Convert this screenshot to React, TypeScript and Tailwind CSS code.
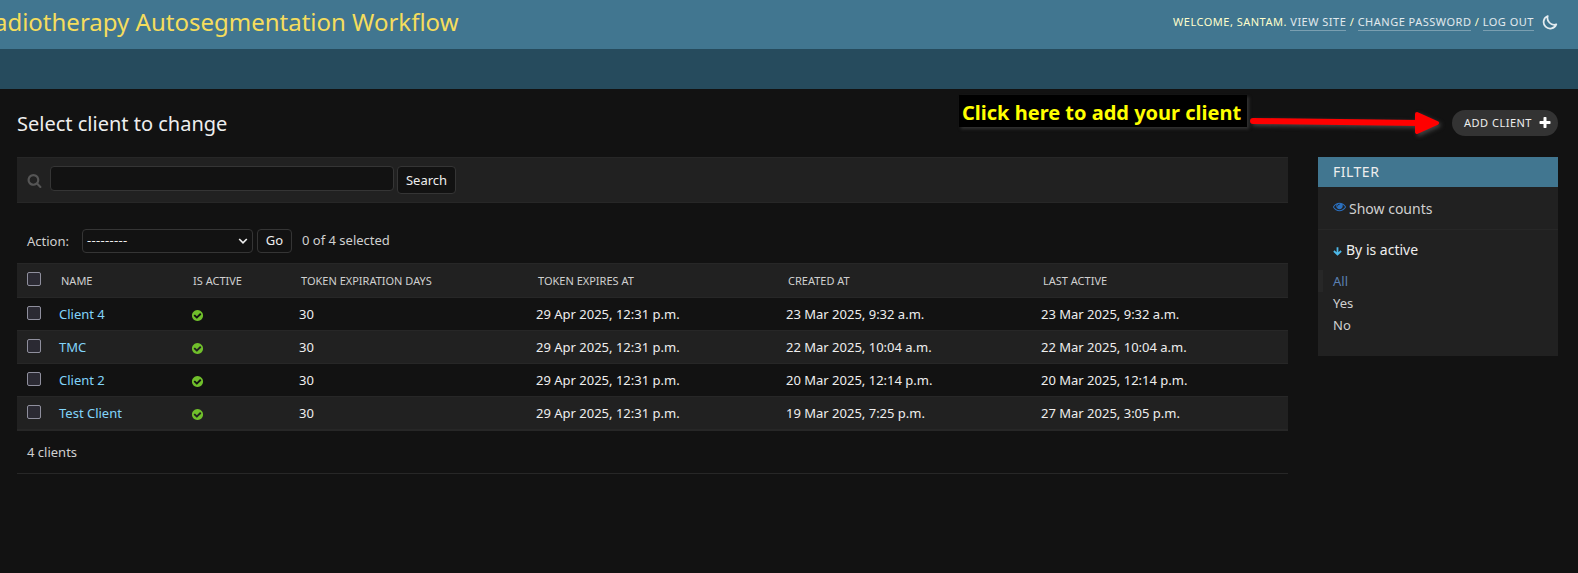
import React from "react";

const rows = [
  { name: "Client 4", created: "23 Mar 2025, 9:32 a.m.", last: "23 Mar 2025, 9:32 a.m." },
  { name: "TMC", created: "22 Mar 2025, 10:04 a.m.", last: "22 Mar 2025, 10:04 a.m." },
  { name: "Client 2", created: "20 Mar 2025, 12:14 p.m.", last: "20 Mar 2025, 12:14 p.m." },
  { name: "Test Client", created: "19 Mar 2025, 7:25 p.m.", last: "27 Mar 2025, 3:05 p.m." },
];

const GRID = "grid grid-cols-[42px_132px_108px_237px_250px_255px_1fr]";

function Glyph({ d, className }: { d: string; className: string }) {
  return (
    <svg viewBox="0 0 1792 1792" className={className} fill="currentColor">
      <path d={d} />
    </svg>
  );
}

const YES =
  "M1412 734q0-28-18-46l-91-90q-19-19-45-19t-45 19l-408 407-226-226q-19-19-45-19t-45 19l-91 90q-18 18-18 46 0 27 18 45l362 362q19 19 45 19 27 0 46-19l543-543q18-18 18-45zm252 162q0 209-103 385.5t-279.5 279.5-385.5 103-385.5-103-279.5-279.5-103-385.5 103-385.5 279.5-279.5 385.5-103 385.5 103 279.5 279.5 103 385.5z";
const SEARCH =
  "M1216 832q0-185-131.5-316.5t-316.5-131.5-316.5 131.5-131.5 316.5 131.5 316.5 316.5 131.5 316.5-131.5 131.5-316.5zm512 832q0 52-38 90t-90 38q-54 0-90-38l-343-342q-179 124-399 124-143 0-273.5-55.5t-225-150-150-225-55.5-273.5 55.5-273.5 150-225 225-150 273.5-55.5 273.5 55.5 225 150 150 225 55.5 273.5q0 220-124 399l343 343q37 37 37 90z";
const PLUS =
  "M1600 736v192q0 40-28 68t-68 28h-416v416q0 40-28 68t-68 28h-192q-40 0-68-28t-28-68v-416h-416q-40 0-68-28t-28-68v-192q0-40 28-68t68-28h416v-416q0-40 28-68t68-28h192q40 0 68 28t28 68v416h416q40 0 68 28t28 68z";
const EYE =
  "M1664 960q-152-236-381-353 61 104 61 225 0 185-131.5 316.5t-316.5 131.5-316.5-131.5-131.5-316.5q0-121 61-225-229 117-381 353 133 205 333.5 326.5t434.5 121.5 434.5-121.5 333.5-326.5zm-720-384q0-20-14-34t-34-14q-125 0-214.5 89.5t-89.5 214.5q0 20 14 34t34 14 34-14 14-34q0-86 61-147t147-61q20 0 34-14t14-34zm848 384q0 34-20 69-140 230-376.5 368.5t-499.5 138.5-499.5-139-376.5-368q-20-35-20-69t20-69q140-229 376.5-368t499.5-139 499.5 139 376.5 368q20 35 20 69z";

function Check() {
  return (
    <input
      type="checkbox"
      className="ml-[10px] block size-[14px] appearance-none rounded-[2px] border border-[#8f8f9d] bg-[#2b2a33]"
    />
  );
}

function Header() {
  return (
    <header className="flex h-[49px] justify-between bg-[#417690] pr-5">
      <h1 className="-ml-[21px] whitespace-nowrap pt-[4px] text-[24px] leading-[36px] text-[#f5dd5d]">
        Radiotherapy Autosegmentation Workflow
      </h1>
      <div className="flex items-start pt-[14px] text-[11px] uppercase leading-[16px] tracking-[0.5px] text-[#ffffcc]">
        <span className="whitespace-pre">Welcome, santam. </span>
        <a className="border-b border-white/30 text-white/85">View site</a>
        <span className="whitespace-pre"> / </span>
        <a className="border-b border-white/30 text-white/85">Change password</a>
        <span className="whitespace-pre"> / </span>
        <a className="border-b border-white/30 text-white/85">Log out</a>
        <svg viewBox="0 0 24 24" className="ml-[8px] size-4 text-[#e4ecf0]" fill="none" stroke="currentColor" strokeWidth="2.6" strokeLinejoin="round">
          <path d="M8.6 3A9.8 9.8 0 1 0 21.4 15.6A10.2 10.2 0 0 1 8.6 3Z" />
        </svg>
      </div>
    </header>
  );
}

function Changelist() {
  return (
    <div className="w-[1271px]">
      <div className="flex h-[46px] items-start border-y border-[#272727] bg-[#212121] pl-[10px] pt-[8px]">
        <Glyph d={SEARCH} className="mt-[7px] size-[15px] text-[#555555]" />
        <input className="ml-[8px] h-[25px] w-[344px] rounded-[4px] border border-[#353535] bg-[#121212]" />
        <button className="ml-[3px] h-[28px] w-[59px] rounded-[4px] border border-[#353535] bg-[#121212] pt-px text-[13px] text-[#eeeeee]">
          Search
        </button>
      </div>
      <div className="flex h-[60px] items-start pl-[10px] pt-[26px] text-[13px] text-[#d0d0d0]">
        <span className="w-[55px] leading-[24px]">Action:</span>
        <div className="flex h-6 w-[171px] items-center justify-between rounded-[4px] border border-[#353535] bg-[#121212] pl-[4px] pr-[4px] text-[#eeeeee]">
          <span className="tracking-[0.3px]">---------</span>
          <svg viewBox="0 0 10 10" className="size-[10px]" fill="none" stroke="currentColor" strokeWidth="1.7">
            <path d="M1.2 3L5 6.8L8.8 3" />
          </svg>
        </div>
        <button className="ml-1 h-6 w-[35px] rounded-[4px] border border-[#353535] bg-[#121212] text-[#eeeeee]">Go</button>
        <span className="ml-[10px] leading-[22px]">0 of 4 selected</span>
      </div>
      <div className={`${GRID} h-[34px] border-t border-[#272727] bg-[#212121] text-[11px] uppercase leading-[16px] text-[#d0d0d0]`}>
        <div className="pt-[8px]"><Check /></div>
        {["Name", "Is active", "Token expiration days", "Token expires at", "Created at", "Last active"].map((h) => (
          <div key={h} className="whitespace-nowrap pl-[2px] pt-[9px]">{h}</div>
        ))}
      </div>
      <div>
        {rows.map((r) => (
          <div
            key={r.name}
            className={`${GRID} h-[33px] whitespace-nowrap border-t border-[#272727] text-[13px] leading-[16px] text-[#eeeeee] odd:bg-[#121212] even:bg-[#212121]`}
          >
            <div className="pt-[8px]"><Check /></div>
            <a className="pt-[8px] text-[#81d4fa]">{r.name}</a>
            <div className="pt-[11px]"><Glyph d={YES} className="size-[13px] text-[#70bf2b]" /></div>
            <div className="pt-[8px]">30</div>
            <div className="pt-[8px]">29 Apr 2025, 12:31 p.m.</div>
            <div className="pt-[8px]">{r.created}</div>
            <div className="pt-[8px]">{r.last}</div>
          </div>
        ))}
      </div>
      <p className="h-[45px] border-b border-t-2 border-[#272727] pl-[10px] pt-[10px] text-[13px] leading-[22px] text-[#d0d0d0]">
        4 clients
      </p>
    </div>
  );
}

function Filter() {
  return (
    <aside className="h-[199px] w-[240px] bg-[#212121]">
      <h2 className="h-[30px] bg-[#417690] pl-[15px] text-[14px] uppercase leading-[30px] tracking-[0.5px] text-[#eeeeee]">Filter</h2>
      <div className="flex h-[43px] items-start border-b border-[#272727] pl-[15px] pt-[11px] text-[14px] leading-[22px] text-[#d0d0d0]">
        <Glyph d={EYE} className="mr-[3px] mt-[2px] size-[13px] text-[#2b70bf]" />
        Show counts
      </div>
      <div className="flex h-[40px] items-start pl-[15px] pt-[9px] text-[14px] leading-[22px] text-[#eeeeee]">
        <svg viewBox="0 0 9 9" className="mr-[4px] mt-[8px] size-[9px] text-[#4db8e8]" fill="none" stroke="currentColor" strokeWidth="1.8">
          <path d="M4.5 0.3V7.3M0.9 4L4.5 7.5L8.1 4" />
        </svg>
        By is active
      </div>
      <ul className="text-[13px] leading-[22px] text-[#d0d0d0]">
        <li className="border-l-[5px] border-[#272727] pl-[10px] text-[#5b80b2]">All</li>
        <li className="pl-[15px]">Yes</li>
        <li className="pl-[15px]">No</li>
      </ul>
    </aside>
  );
}

export default function App() {
  return (
    <div className="relative h-[573px] w-[1578px] overflow-hidden bg-[#121212] font-['Noto_Sans',sans-serif]">
      <Header />
      <div className="h-10 bg-[#264b5d]" />
      <main className="pl-[17px] pr-5">
        <div className="flex h-[68px] items-start justify-between">
          <h2 className="pt-[21px] text-[20px] leading-[28px] text-[#eeeeee]">Select client to change</h2>
          <a className="mt-[21px] flex h-[26px] w-[106px] items-center rounded-full bg-[#333333] pl-[12px] text-[11px] uppercase tracking-[0.5px] text-[#eeeeee]">
            <span className="whitespace-nowrap">Add client</span>
            <Glyph d={PLUS} className="ml-[5.5px] size-[14px] text-white" />
          </a>
        </div>
        <div className="flex items-start justify-between">
          <Changelist />
          <Filter />
        </div>
      </main>
      <div className="absolute left-[959px] top-[95px] h-[32px] w-[288px] whitespace-nowrap bg-black pl-[3px] text-[20px] font-bold leading-[36px] text-[#ffff00] shadow-[2px_2px_3px_#333333]">
        Click here to add your client
      </div>
      <svg className="absolute left-[1246px] top-[105px] h-[36px] w-[204px] drop-shadow-[2px_2px_2px_#444444]" viewBox="0 0 204 36">
        <path d="M7 16L174 18" stroke="#ff0000" strokeWidth="6" strokeLinecap="round" />
        <path d="M171 9L191 18L171 27Z" fill="#ff0000" stroke="#ff0000" strokeWidth="4" strokeLinejoin="round" />
      </svg>
    </div>
  );
}
